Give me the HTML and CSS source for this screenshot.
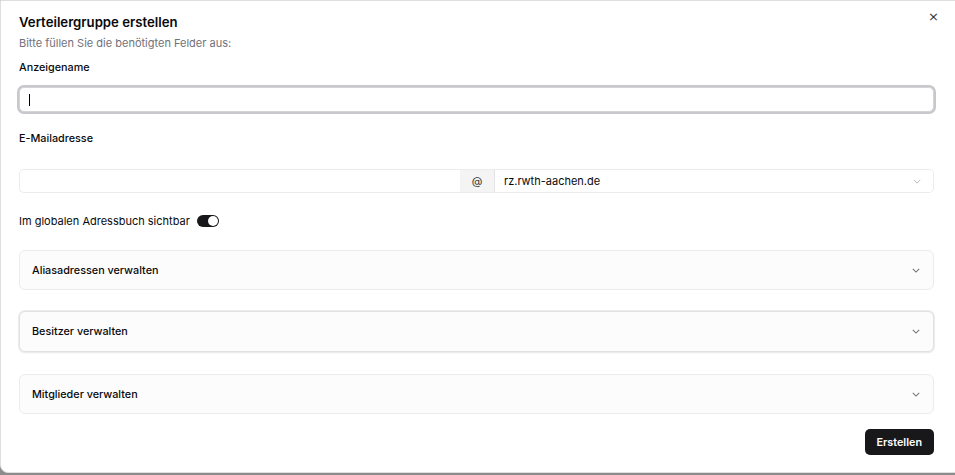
FILE: index.html
```html
<!DOCTYPE html>
<html>
<head>
    <meta charset="UTF-8">
    <title>Verteilergruppe erstellen</title>
    <link rel="stylesheet" href="styles.css">
</head>
<body>
    <div class="dialog">
        <button class="close" type="button">&times;</button>
        <h2 class="title">Verteilergruppe erstellen</h2>
        <p class="subtitle">Bitte füllen Sie die benötigten Felder aus:</p>

        <label class="label" for="anzeigename">Anzeigename</label>
        <div class="input focus">
            <span class="caret"></span>
        </div>

        <label class="label mail-label" for="mail">E-Mailadresse</label>
        <div class="mail-group">
            <div class="mail-input"></div>
            <div class="mail-at">@</div>
            <div class="mail-domain">
                <span>rz.rwth-aachen.de</span>
                <svg class="chev light" viewBox="0 0 10 6" width="8" height="5"><path d="M1 1l4 4 4-4" fill="none" stroke="currentColor" stroke-width="1.2"/></svg>
            </div>
        </div>

        <div class="toggle-row">
            <span>Im globalen Adressbuch sichtbar</span>
            <span class="toggle"><span class="knob"></span></span>
        </div>

        <div class="accordion">
            <span>Aliasadressen verwalten</span>
            <svg class="chev" viewBox="0 0 10 6" width="8" height="5"><path d="M1 1l4 4 4-4" fill="none" stroke="currentColor" stroke-width="1.3"/></svg>
        </div>
        <div class="accordion active">
            <span>Besitzer verwalten</span>
            <svg class="chev" viewBox="0 0 10 6" width="8" height="5"><path d="M1 1l4 4 4-4" fill="none" stroke="currentColor" stroke-width="1.3"/></svg>
        </div>
        <div class="accordion last">
            <span>Mitglieder verwalten</span>
            <svg class="chev" viewBox="0 0 10 6" width="8" height="5"><path d="M1 1l4 4 4-4" fill="none" stroke="currentColor" stroke-width="1.3"/></svg>
        </div>

        <div class="footer">
            <button class="submit" type="button">Erstellen</button>
        </div>
    </div>
</body>
</html>
```

FILE: styles.css
```css
html, body {
    margin: 0;
    padding: 0;
}

body {
    background-color: #8c8c8c;
    font-family: Inter, "Liberation Sans", sans-serif;
    color: #09090b;
    height: 475px;
    overflow: hidden;
}

.dialog {
    position: relative;
    box-sizing: border-box;
    width: 962px;
    height: 473px;
    background-color: #ffffff;
    border: 1px solid #dedede;
    border-radius: 0 0 8px 8px;
    padding: 12px 27px 0 18px;
    display: flex;
    flex-direction: column;
}

.close {
    position: absolute;
    top: 8px;
    right: 22px;
    border: none;
    background: none;
    font-size: 13px;
    color: #333;
    padding: 0;
    cursor: pointer;
    font-family: "DejaVu Sans", sans-serif;
}

.title {
    margin: 0;
    font-size: 13.2px;
    font-weight: 600;
    line-height: 18px;
}

.subtitle {
    margin: 4px 0 0 0;
    font-size: 11px;
    line-height: 16px;
    color: #71717a;
}

.label {
    margin-top: 9px;
    font-size: 10.8px;
    font-weight: 500;
    line-height: 16px;
}

.mail-label {
    margin-top: 19px;
}

.input {
    margin-top: 11px;
    box-sizing: border-box;
    height: 25px;
    border: 1px solid #d4d4d8;
    border-radius: 5px;
    background: #ffffff;
    display: flex;
    align-items: center;
    padding-left: 9px;
}

.input.focus {
    box-shadow: 0 0 0 2px #c7c7cc;
}

.caret {
    width: 1px;
    height: 12px;
    background: #000;
}

.mail-group {
    margin-top: 22px;
    height: 24px;
    display: flex;
    font-size: 11px;
}

.mail-input {
    width: 441px;
    box-sizing: border-box;
    border: 1px solid #ececee;
    border-right: none;
    border-radius: 5px 0 0 5px;
}

.mail-at {
    width: 34px;
    display: flex;
    align-items: center;
    justify-content: center;
    background: #f4f4f5;
    border-top: 1px solid #ececee;
    border-bottom: 1px solid #ececee;
    box-sizing: border-box;
    color: #333;
}

.mail-domain {
    flex: 1;
    box-sizing: border-box;
    border: 1px solid #ececee;
    border-left: 1px solid #e4e4e7;
    border-radius: 0 5px 5px 0;
    display: flex;
    align-items: center;
    justify-content: space-between;
    padding: 0 12px 0 9px;
}

.chev {
    color: #71717a;
}

.chev.light {
    color: #b4b4bb;
}

.toggle-row {
    margin-top: 20px;
    display: flex;
    align-items: center;
    gap: 7px;
    font-size: 11px;
    line-height: 16px;
}

.toggle {
    width: 22px;
    height: 12px;
    border-radius: 6px;
    background: #18181b;
    display: flex;
    align-items: center;
    justify-content: flex-end;
    padding: 0 1px;
    box-sizing: border-box;
}

.knob {
    width: 10px;
    height: 10px;
    border-radius: 50%;
    background: #ffffff;
}

.accordion {
    box-sizing: border-box;
    height: 40px;
    margin-top: 21px;
    border: 1px solid #ececee;
    border-radius: 6px;
    background: #fcfcfc;
    display: flex;
    align-items: center;
    justify-content: space-between;
    padding: 0 13px 0 12px;
    font-size: 10.8px;
    font-weight: 500;
}

.accordion:first-of-type {
    margin-top: 22px;
}

.accordion.last {
    margin-top: 22px;
}

.accordion.active {
    height: 41px;
    border: 1px solid #e2e2e5;
    box-shadow: 0 0 0 1px #ececee, 0 1px 2px rgba(0,0,0,0.08);
}

.footer {
    margin-top: 15px;
    display: flex;
    justify-content: flex-end;
}

.submit {
    height: 26px;
    padding: 0 12px;
    border: none;
    border-radius: 5px;
    background: #18181b;
    color: #ffffff;
    font-family: Inter, "Liberation Sans", sans-serif;
    font-size: 10.8px;
    font-weight: 600;
    cursor: pointer;
}
```
